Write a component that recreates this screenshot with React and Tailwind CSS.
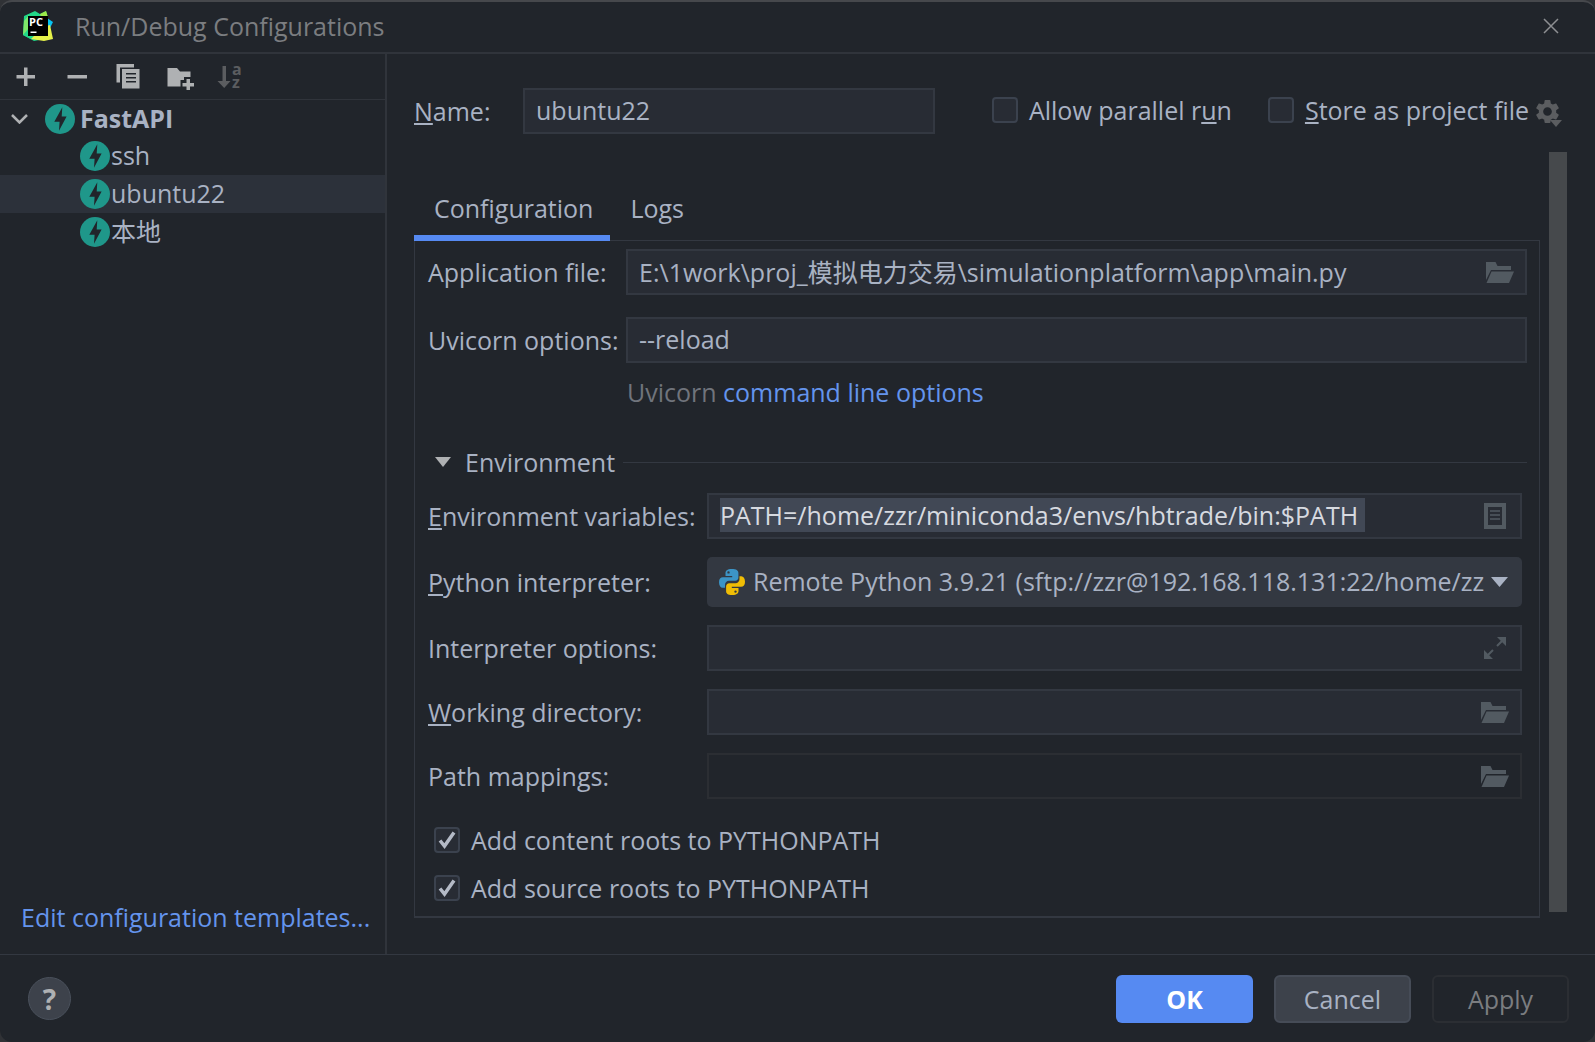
import { useEffect, useRef, useState } from 'react';
import { MdSettings } from 'react-icons/md';

const FIELD =
  'h-[46px] w-full border-2 border-[#333841] bg-[#282c34] px-[11px] pb-0.5 text-[#a9b2c3] outline-none';

const PyCharmLogo = () => (
  <svg width="30" height="30" viewBox="0 0 30 30" aria-hidden="true">
    <path d="M1 5 12 0l5 3 6-3 2 8-8 8L8 28 0 24z" fill="#21d789" />
    <path d="M17 3l6-3 2 6-6 2z" fill="#9be84a" />
    <path d="m24 7 6 4-3 6-5-3z" fill="#07c3f2" />
    <path d="M1 10 6 4v16l-6 4z" fill="#7fe86a" />
    <path d="m0 24 6-7 10 12-5 1z" fill="#21d789" />
    <path d="m27 14 3 14-9 2-13-2 12-12z" fill="#e6f24a" />
    <path d="M5 5h20v20H5z" fill="#000" />
    <text x="6" y="15" fontSize="11" fontWeight="700" fill="#fff" fontFamily="Open Sans, sans-serif">PC</text>
    <path d="M7.500 20.500h6v1.500h-6z" fill="#fff" />
  </svg>
);

const FastApiIcon = () => (
  <svg width="30" height="30" viewBox="0 0 30 30" className="shrink-0" aria-hidden="true">
    <circle cx="15" cy="15" r="15" fill="#1f978a" />
    <path d="M17.300 3.300 9.300 17.700H14.600L14 26.700 21.600 12.600H16.700z" fill="#21252b" />
  </svg>
);

const OpenFolderIcon = () => (
  <svg width="28" height="24" viewBox="0 0 28 24" fill="#525a61" aria-hidden="true">
    <path d="M0 2h9.500l2 4H25v4H5L0 20z" />
    <path d="M5.500 11.500H28L23 23H.500z" />
  </svg>
);

const ListIcon = () => (
  <svg width="22" height="26" viewBox="0 0 22 26" fill="none" stroke="#525a61" aria-hidden="true">
    <path d="M2 2h18v22H2z" strokeWidth="4" />
    <path d="M6 8h10M6 12h10M6 16h10" strokeWidth="1.500" />
  </svg>
);

const ExpandIcon = () => (
  <svg width="24" height="24" viewBox="0 0 24 24" fill="#525a61" aria-hidden="true">
    <path d="M14 1h9v9zM1 14v9h9z" />
    <path d="m14 10 5-5M5 19l5-5" stroke="#525a61" strokeWidth="2" />
  </svg>
);

const toolbar = [
  {
    label: 'Add New Configuration',
    icon: <path d="M12 4.500h3.500V12H23v3.500h-7.500V23H12v-7.500H4.500V12H12z" />,
  },
  { label: 'Remove Configuration', icon: <path d="M4.500 12H24v3.500H4.500z" /> },
  {
    label: 'Copy Configuration',
    icon: (
      <>
        <path d="M2.500 1H20v3.500H6v15H2.500z" />
        <path fillRule="evenodd" d="M8 6h17.500v19.500H8zm4 4v1.500h10V10zm0 4v1.500h10V14zm0 4v1.500h10V18z" />
      </>
    ),
  },
  {
    label: 'Create New Folder',
    icon: (
      <>
        <path d="M2.500 5H12l3 3.500h10.500V14H19v3h-3.500v6.500h-13z" />
        <path d="M21.500 16H25v4h4v3.500h-4V27h-3.500v-3.500h-4V20h4z" />
      </>
    ),
  },
  {
    label: 'Sort Configurations',
    disabled: true,
    icon: (
      <>
        <path d="M6.500 3H10v15h4.500L8.200 25 1.500 18h5z" />
        <text fontSize="16" fontWeight="700" fontFamily="Open Sans, sans-serif">
          <tspan x="16" y="12">a</tspan>
          <tspan x="16" y="25">z</tspan>
        </text>
      </>
    ),
  },
];

const configurations = ['ssh', 'ubuntu22', '本地'];

const IconField = ({ id, value = '', readOnly, icon, iconLabel, inputRef }) => {
  const [text, setText] = useState(value);
  return (
    <div className="relative">
      <input
        ref={inputRef}
        id={id}
        type="text"
        value={text}
        readOnly={readOnly}
        onChange={(e) => setText(e.target.value)}
        className={
          readOnly
            ? 'h-[46px] w-full border-2 border-[#2b2e33] bg-transparent pl-[11px] pr-14 outline-none'
            : `${FIELD} pr-14 selection:bg-[#414855] selection:text-[#d7dae0]`
        }
      />
      {icon && (
        <button
          type="button"
          aria-label={iconLabel}
          className="absolute inset-y-0 right-[13px] flex w-7 items-center justify-center"
        >
          {icon}
        </button>
      )}
    </div>
  );
};

const CheckBox = ({ id, defaultChecked, children }) => (
  <div className="flex items-center gap-[11px]">
    <span className="relative flex h-[26px] w-[26px]">
      <input
        id={id}
        type="checkbox"
        defaultChecked={defaultChecked}
        className="peer h-[26px] w-[26px] appearance-none rounded border-2 border-[#3b424e] bg-[#282c34]"
      />
      <svg
        viewBox="0 0 26 26"
        className="pointer-events-none absolute inset-0 hidden peer-checked:block"
        fill="none"
        stroke="#b4bac6"
        strokeWidth="3.500"
        aria-hidden="true"
      >
        <path d="m6 13.500 4.500 5.500L20 5.500" />
      </svg>
    </span>
    <label htmlFor={id} className="whitespace-nowrap">
      {children}
    </label>
  </div>
);

const Mnemonic = ({ children }) => (
  <span className="underline decoration-2 underline-offset-2">{children}</span>
);

const App = () => {
  const [selected, setSelected] = useState('ubuntu22');
  const [tab, setTab] = useState('Configuration');
  const envRef = useRef(null);

  useEffect(() => {
    envRef.current?.focus();
    envRef.current?.select();
  }, []);

  return (
    <div className="bg-[#303236]">
      <div className="flex min-h-screen flex-col rounded-xl border-t-2 border-[#46484c] bg-[#21252b] font-['Open_Sans','Noto_Sans_CJK_SC',sans-serif] text-[25px] leading-[34px] text-[#a9b2c3]">
        <header className="flex h-[52px] items-center border-b-2 border-[#30343b] pb-0.5 pl-[23px] pr-8">
          <PyCharmLogo />
          <h1 className="ml-[22px] flex-1 text-[#7b7d80]">Run/Debug Configurations</h1>
          <button type="button" aria-label="Close" className="p-1">
            <svg width="16" height="16" viewBox="0 0 16 16" stroke="#8d8f92" strokeWidth="1.500" aria-hidden="true">
              <path d="m1 1 14 14M15 1 1 15" />
            </svg>
          </button>
        </header>

        <div className="flex flex-1">
          <aside className="flex w-[387px] shrink-0 flex-col border-r-2 border-[#30343b]">
            <div className="flex h-[46px] items-center border-b border-[#30343b]">
              {toolbar.map((item) => (
                <button
                  key={item.label}
                  type="button"
                  aria-label={item.label}
                  disabled={item.disabled}
                  className="flex w-[51px] justify-center"
                >
                  <svg
                    width="28"
                    height="28"
                    viewBox="0 0 28 28"
                    fill={item.disabled ? '#5b5d60' : '#afb1b3'}
                    className="overflow-visible"
                    aria-hidden="true"
                  >
                    {item.icon}
                  </svg>
                </button>
              ))}
            </div>

            <div className="flex-1">
              <div className="flex h-[37px] items-center pl-[11px]">
                <svg width="17" height="10" viewBox="0 0 17 10" fill="none" stroke="#afb1b3" strokeWidth="2.500" aria-hidden="true">
                  <path d="m1 1 7.500 7.500L16 1" />
                </svg>
                <span className="ml-[17px] flex items-center gap-[5px] font-bold">
                  <FastApiIcon />
                  <span className="pb-0.5">FastAPI</span>
                </span>
              </div>
              {configurations.map((name) => (
                <button
                  key={name}
                  type="button"
                  onClick={() => setSelected(name)}
                  className={`flex h-[38px] w-full items-center gap-px pl-20 ${
                    selected === name ? 'bg-[#2c313a]' : ''
                  }`}
                >
                  <FastApiIcon />
                  <span className="pb-0.5">{name}</span>
                </button>
              ))}
            </div>

            <a href="#templates" className="mb-5 whitespace-nowrap pl-[21px] text-[#6494ed]">
              Edit configuration templates...
            </a>
          </aside>

          <main className="flex min-w-0 flex-1 flex-col pb-9 pl-[27px] pr-7 pt-[34px]">
            <div className="flex items-center">
              <label htmlFor="name" className="w-[109px]">
                <Mnemonic>N</Mnemonic>ame:
              </label>
              <div className="w-[412px]">
                <input id="name" type="text" defaultValue="ubuntu22" className={FIELD} />
              </div>
              <div className="ml-auto mr-[5px] flex items-center pb-0.5">
                <CheckBox id="parallel">
                  Allow parallel r<Mnemonic>u</Mnemonic>n
                </CheckBox>
                <div className="ml-9">
                  <CheckBox id="store">
                    <Mnemonic>S</Mnemonic>tore as project file
                  </CheckBox>
                </div>
                <button type="button" aria-label="Storage options" className="relative ml-1 pt-0.5 text-[#5b5d60]">
                  <MdSettings size={29} />
                  <svg width="12" height="7" viewBox="0 0 12 7" fill="currentColor" className="absolute -bottom-px right-0" aria-hidden="true">
                    <path d="M0 0h12L6 7z" />
                  </svg>
                </button>
              </div>
            </div>

            <div className="mt-[18px] flex flex-1 gap-[9px]">
              <div className="flex min-w-0 flex-1 flex-col pt-[27px]">
                <div className="relative -mb-px flex" role="tablist">
                  {['Configuration', 'Logs'].map((name) => (
                    <button
                      key={name}
                      type="button"
                      role="tab"
                      aria-selected={tab === name}
                      onClick={() => setTab(name)}
                      className={`h-[62px] border-b-6 pl-5 pr-[17px] pt-0.5 ${
                        tab === name ? 'border-[#568af2]' : 'border-transparent'
                      }`}
                    >
                      {name}
                    </button>
                  ))}
                </div>

                <div className="flex-1 border border-b-2 border-[#333841] pb-[10px] pl-[13px] pr-3 pt-2">
                  <div className="grid grid-cols-[198px_1fr] items-center gap-y-[22px]">
                    <label htmlFor="app-file">Application file:</label>
                    <IconField
                      id="app-file"
                      value="E:\1work\proj_模拟电力交易\simulationplatform\app\main.py"
                      icon={<OpenFolderIcon />}
                      iconLabel="Browse application file"
                    />
                    <label htmlFor="uvicorn">Uvicorn options:</label>
                    <IconField id="uvicorn" value="--reload" />
                  </div>
                  <p className="mt-3 pl-[199px] text-[#70747c]">
                    Uvicorn{' '}
                    <a href="#uvicorn-options" className="text-[#6494ed]">
                      command line options
                    </a>
                  </p>

                  <button type="button" className="mt-9 flex w-full items-center pl-[7px]">
                    <svg width="16" height="10" viewBox="0 0 16 10" fill="#afb1b3" aria-hidden="true">
                      <path d="M0 0h16L8 10z" />
                    </svg>
                    <span className="ml-[14px] mr-2">Environment</span>
                    <span className="h-px flex-1 bg-[#333841]" />
                  </button>

                  <div className="mt-[14px] grid grid-cols-[279px_1fr] items-center gap-y-[18px] pr-[5px]">
                    <label htmlFor="env">
                      <Mnemonic>E</Mnemonic>nvironment variables:
                    </label>
                    <IconField
                      id="env"
                      inputRef={envRef}
                      value="PATH=/home/zzr/miniconda3/envs/hbtrade/bin:$PATH "
                      icon={<ListIcon />}
                      iconLabel="Edit environment variables"
                    />

                    <label htmlFor="interpreter">
                      <Mnemonic>P</Mnemonic>ython interpreter:
                    </label>
                    <div className="relative">
                      <select
                        id="interpreter"
                        className="h-[50px] w-full appearance-none rounded-[5px] bg-[#333841] pb-0.5 pl-[46px] pr-9 outline-none"
                      >
                        <option>Remote Python 3.9.21 (sftp://zzr@192.168.118.131:22/home/zz</option>
                      </select>
                      <span className="pointer-events-none absolute inset-y-0 left-3 flex items-center">
                        <svg width="26" height="26" viewBox="0 0 26 26" aria-hidden="true">
                          <path
                            d="M12.800 0C8 0 6.500 1.800 6.500 4v3h6.700v1.200H4C1.500 8.200 0 10 0 13.200c0 3.500 1.500 5.600 3.700 5.600H6v-3c0-2.300 1.800-4 4-4h6.200c1.900 0 3.200-1.500 3.200-3.300V4c0-2.500-2-4-6.600-4zM9.500 2.200a1.200 1.200 0 1 1 0 2.400 1.200 1.200 0 0 1 0-2.400z"
                            fill="#3c94c6"
                          />
                          <path
                            d="M13.200 26c4.800 0 6.300-1.800 6.300-4v-3h-6.700v-1.200H22c2.500 0 4-1.800 4-5 0-3.500-1.500-5.600-3.700-5.600H20.500v3c0 2.300-1.800 4-4 4h-6.200c-1.900 0-3.200 1.500-3.200 3.300V22c0 2.500 1.500 4 6.100 4zm3.300-2.200a1.200 1.200 0 1 1 0-2.400 1.200 1.200 0 0 1 0 2.400z"
                            fill="#f0bd05"
                          />
                        </svg>
                      </span>
                      <span className="pointer-events-none absolute inset-y-0 right-[14px] flex items-center">
                        <svg width="17" height="10" viewBox="0 0 17 10" fill="#a9b2c3" aria-hidden="true">
                          <path d="M0 0h17L8.500 10z" />
                        </svg>
                      </span>
                    </div>

                    <label htmlFor="interpreter-options">Interpreter options:</label>
                    <IconField id="interpreter-options" icon={<ExpandIcon />} iconLabel="Expand" />

                    <label htmlFor="workdir">
                      <Mnemonic>W</Mnemonic>orking directory:
                    </label>
                    <IconField id="workdir" icon={<OpenFolderIcon />} iconLabel="Browse working directory" />

                    <label htmlFor="mappings">Path mappings:</label>
                    <IconField id="mappings" readOnly icon={<OpenFolderIcon />} iconLabel="Edit path mappings" />
                  </div>

                  <div className="mt-6 flex flex-col gap-[14px] pl-[6px]">
                    <CheckBox id="content-roots" defaultChecked>
                      Add content roots to PYTHONPATH
                    </CheckBox>
                    <CheckBox id="source-roots" defaultChecked>
                      Add source roots to PYTHONPATH
                    </CheckBox>
                  </div>
                </div>
              </div>
              <div className="mb-[6px] w-[18px] bg-[#46494c]" />
            </div>
          </main>
        </div>

        <footer className="flex h-[88px] items-center gap-[21px] border-t border-[#333841] pl-7 pr-[26px]">
          <button
            type="button"
            aria-label="Help"
            className="mr-auto h-[43px] w-[43px] rounded-full border border-[#4a515c] bg-[#3d424b] text-[28px] font-bold text-[#afb1b3]"
          >
            ?
          </button>
          <button type="button" className="h-12 w-[137px] rounded-md bg-[#568af2] font-bold text-white">
            OK
          </button>
          <button type="button" className="h-12 w-[137px] rounded-md border-2 border-[#464c57] bg-[#3d424b]">
            Cancel
          </button>
          <button
            type="button"
            disabled
            className="h-12 w-[137px] rounded-md border-2 border-[#2b2e33] text-[#7b7d80]"
          >
            Apply
          </button>
        </footer>
      </div>
    </div>
  );
};

export default App;
